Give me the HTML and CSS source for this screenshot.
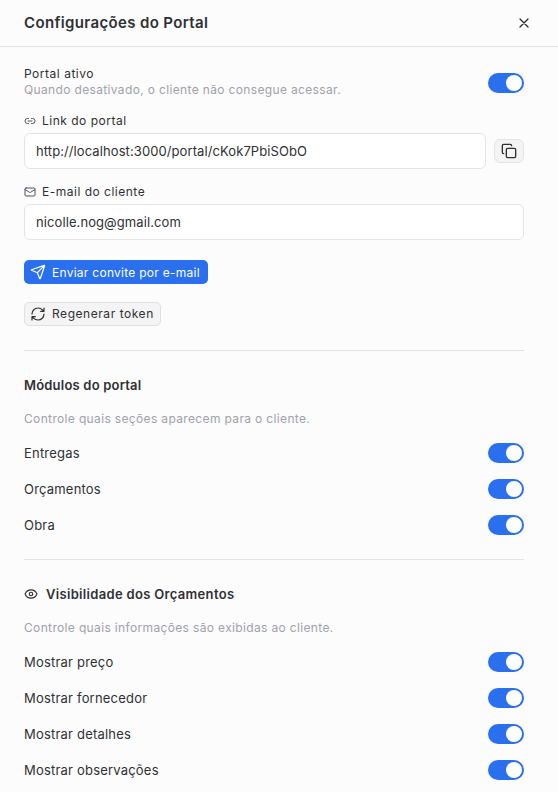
FILE: index.html
```html
<!DOCTYPE html>
<html lang="pt">
<head>
<meta charset="utf-8">
<title>Configurações do Portal</title>
<link rel="stylesheet" href="styles.css">
</head>
<body>
<div class="panel">
  <header class="head">
    <h1>Configurações do Portal</h1>
    <svg class="close" viewBox="0 0 24 24" width="16" height="16"><path d="M18 6 6 18M6 6l12 12"/></svg>
  </header>
  <main class="body">
    <div class="row row-active">
      <div class="active-text"><div class="lbl strong">Portal ativo</div><div class="hint tight">Quando desativado, o cliente não consegue acessar.</div></div>
      <span class="sw"></span>
    </div>
    <div class="field-label link-label">
      <svg class="ic" viewBox="0 0 24 24" width="12" height="12"><path d="M9 17H7A5 5 0 0 1 7 7h2M15 7h2a5 5 0 1 1 0 10h-2M8 12h8"/></svg>
      <span>Link do portal</span>
    </div>
    <div class="link-row">
      <div class="input grow">http://localhost:3000/portal/cKok7PbiSObO</div>
      <button class="copy"><svg class="ic" viewBox="0 0 24 24" width="16" height="16"><rect x="8" y="8" width="14" height="14" rx="2"/><path d="M4 16c-1.1 0-2-.9-2-2V4c0-1.1.9-2 2-2h10c1.1 0 2 .9 2 2"/></svg></button>
    </div>
    <div class="field-label mail-label">
      <svg class="ic" viewBox="0 0 24 24" width="12" height="12"><rect x="2" y="4" width="20" height="16" rx="2"/><path d="m22 7-8.97 5.7a1.94 1.94 0 0 1-2.06 0L2 7"/></svg>
      <span>E-mail do cliente</span>
    </div>
    <div class="input mail-input">nicolle.nog@gmail.com</div>
    <button class="btn primary"><svg viewBox="0 0 24 24" width="16" height="16"><path d="M14.54 21.69a.5.5 0 0 0 .93-.02l6.5-19a.5.5 0 0 0-.63-.63l-19 6.5a.5.5 0 0 0-.02.93l7.93 3.18a2 2 0 0 1 1.11 1.11zM21.85 2.15 10.92 13.08"/></svg>Enviar convite por e-mail</button>
    <button class="btn ghost"><svg viewBox="0 0 24 24" width="16" height="16"><path d="M3 12a9 9 0 0 1 9-9 9.75 9.75 0 0 1 6.74 2.74L21 8M21 3v5h-5M21 12a9 9 0 0 1-9 9 9.75 9.75 0 0 1-6.74-2.74L3 16M8 16H3v5"/></svg>Regenerar token</button>
    <hr class="sep first">
    <h2>Módulos do portal</h2>
    <p class="hint sec">Controle quais seções aparecem para o cliente.</p>
    <div class="list">
      <div class="row"><span class="lbl">Entregas</span><span class="sw"></span></div>
      <div class="row"><span class="lbl">Orçamentos</span><span class="sw"></span></div>
      <div class="row"><span class="lbl">Obra</span><span class="sw"></span></div>
    </div>
    <hr class="sep second">
    <h2 class="with-ic"><svg class="ic" viewBox="0 0 24 24" width="14" height="14"><path d="M2.06 12.35a1 1 0 0 1 0-.7 10.75 10.75 0 0 1 19.88 0 1 1 0 0 1 0 .7 10.75 10.75 0 0 1-19.88 0"/><circle cx="12" cy="12" r="3"/></svg>Visibilidade dos Orçamentos</h2>
    <p class="hint sec">Controle quais informações são exibidas ao cliente.</p>
    <div class="list">
      <div class="row"><span class="lbl">Mostrar preço</span><span class="sw"></span></div>
      <div class="row"><span class="lbl">Mostrar fornecedor</span><span class="sw"></span></div>
      <div class="row"><span class="lbl">Mostrar detalhes</span><span class="sw"></span></div>
      <div class="row"><span class="lbl">Mostrar observações</span><span class="sw"></span></div>
    </div>
  </main>
</div>
</body>
</html>
```
FILE: styles.css
```css
* { box-sizing: border-box; }
html, body { margin: 0; height: 100%; }
body { background: #fcfcfc; color: #303034; font-family: Inter, sans-serif; overflow: hidden; }
svg { fill: none; stroke: currentColor; stroke-width: 2; stroke-linecap: round; stroke-linejoin: round; flex: none; }
.panel { width: 558px; height: 792px; overflow: hidden; }
.head { height: 47px; padding: 0 26px 0 24px; display: flex; align-items: center; justify-content: space-between; border-bottom: 1px solid #e4e4e4; }
h1 { margin: 0; font-size: 15px; line-height: 20px; font-weight: 600; letter-spacing: 0.36px; color: #303034; }
.close { color: #303034; stroke-width: 2; }
.body { padding: 0 34px 0 24px; }
.row { display: flex; align-items: center; justify-content: space-between; height: 20px; }
.row-active { height: 34px; margin-top: 19px; }
.active-text { align-self: flex-start; }
.lbl { font-size: 13px; line-height: 15px; letter-spacing: 0.2px; color: #303034; }
.lbl.strong { font-size: 12px; letter-spacing: 0.52px; }
.hint { font-size: 12px; line-height: 16px; letter-spacing: 0.35px; color: #a1a1aa; margin: 0; }
.hint.tight { line-height: 17px; }
.sw { width: 36px; height: 20px; border-radius: 10px; background: #2a6fee; position: relative; flex: none; }
.sw::after { content: ""; position: absolute; right: 2px; top: 2px; width: 16px; height: 16px; border-radius: 50%; background: #fff; }
.field-label { display: flex; align-items: center; gap: 6px; font-size: 12px; line-height: 16px; letter-spacing: 0.5px; color: #303034; }
.field-label .ic { color: #52525b; }
.link-label { margin-top: 13px; }
.mail-label { margin-top: 15px; }
.link-row { display: flex; align-items: center; gap: 8px; margin-top: 4px; }
.input { height: 36px; display: flex; align-items: center; padding: 0 11px; background: #fff; border: 1px solid #e4e4e4; border-radius: 6px; font-size: 13px; letter-spacing: 0.09px; color: #303034; }
.mail-input { margin-top: 4px; }
.grow { flex: 1; min-width: 0; }
.copy { width: 30px; height: 24px; padding: 0; display: flex; align-items: center; justify-content: center; background: #f4f4f4; border: 1px solid #e4e4e4; border-radius: 6px; color: #303034; }
.btn { display: flex; align-items: center; gap: 6px; height: 24px; border-radius: 5px; font-family: Inter, sans-serif; font-size: 12px; letter-spacing: 0.3px; }
.btn svg { stroke-width: 1.8; }
.primary { margin-top: 20px; padding: 0 8px 0 6px; letter-spacing: 0.27px; background: #2a6fee; color: #fff; border: 0; }
.ghost { margin-top: 18px; padding: 0 6px 1px 5px; letter-spacing: 0.55px; background: #f4f4f4; color: #303034; border: 1px solid #e0e0e0; }
.sep { border: 0; border-top: 1px solid #e4e4e4; margin: 0; }
.sep.first { margin-top: 24px; }
.sep.second { margin-top: 24px; }
h2 { margin: 0; font-size: 13px; line-height: 16px; font-weight: 600; letter-spacing: 0.2px; color: #303034; }
.first + h2 { margin-top: 26px; }
.second + h2 { margin-top: 26px; }
.with-ic { display: flex; align-items: center; gap: 8px; letter-spacing: 0.32px; }
.sec { margin-top: 18px; }
.list { display: flex; flex-direction: column; gap: 16px; margin-top: 16px; }
```
